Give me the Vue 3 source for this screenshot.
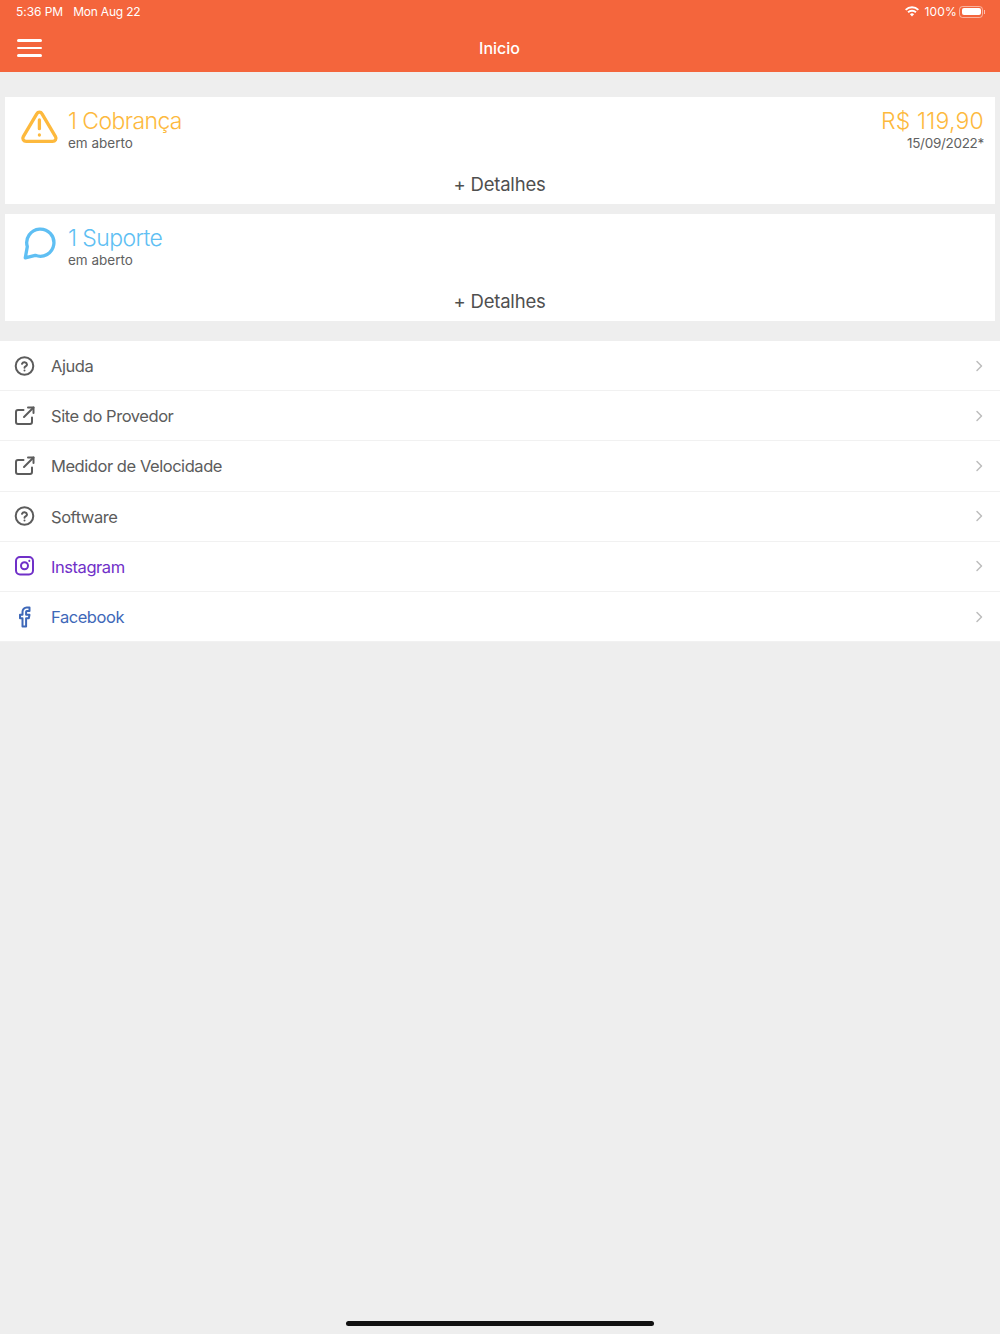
<script setup>
const cards = [
  { id: 'cobranca', title: '1 Cobrança', tone: 'warn', icon: 'alert', value: 'R$ 119,90', date: '15/09/2022*' },
  { id: 'suporte', title: '1 Suporte', tone: 'info', icon: 'chat' },
]

const links = [
  { label: 'Ajuda', icon: 'help', tone: '' },
  { label: 'Site do Provedor', icon: 'open', tone: '' },
  { label: 'Medidor de Velocidade', icon: 'open', tone: '' },
  { label: 'Software', icon: 'help', tone: '' },
  { label: 'Instagram', icon: 'insta', tone: 'insta' },
  { label: 'Facebook', icon: 'face', tone: 'face' },
]
</script>

<template>
  <div class="page">
    <header class="header">
      <div class="status">
        <span class="time">5:36 PM</span>
        <span class="day">Mon Aug 22</span>
        <span class="status-right">
          <svg class="wifi" width="14" height="11" viewBox="0 0 14 11">
            <path d="M7 10.4 4.9 8.2a3 3 0 0 1 4.2 0z" fill="#fff" />
            <path d="M3.7 7 2.4 5.6a6.6 6.6 0 0 1 9.2 0L10.3 7a4.7 4.7 0 0 0-6.6 0z" fill="#fff" />
            <path d="M1.3 4.6 0 3.2a10 10 0 0 1 14 0l-1.3 1.4a8.2 8.2 0 0 0-11.4 0z" fill="#fff" />
          </svg>
          <span class="percent">100%</span>
          <span class="battery"><span class="battery-fill"></span></span>
          <span class="battery-tip"></span>
        </span>
      </div>
      <div class="toolbar">
        <div class="burger"><span></span><span></span><span></span></div>
        <div class="title">Inicio</div>
      </div>
    </header>

    <section class="cards">
      <div v-for="card in cards" :key="card.id" class="card">
        <div class="card-top">
          <svg v-if="card.icon === 'alert'" class="card-icon" width="40" height="36" viewBox="0 0 40 36" fill="none" stroke="#fdb93d" stroke-width="3.3" stroke-linecap="round" stroke-linejoin="round">
            <path d="M16.9 4.6 3.3 27.6c-1.4 2.3.3 4.7 2.9 4.7h26.400c2.600 0 4.300-2.400 2.900-4.700L21.900 4.600c-1.100-2-3.900-2-5 0z" />
            <path d="M19.400 11v8.700" />
            <path d="M19.400 26v.1" />
          </svg>
          <svg v-else class="card-icon" width="40" height="36" viewBox="0 0 40 36" fill="none" stroke="#5fbff3" stroke-width="3.3" stroke-linecap="round" stroke-linejoin="round">
            <path d="M7.300 20.600 5.300 31.800 15.300 29.300A13.600 13.600 0 1 0 7.300 20.600z" />
          </svg>
          <div class="card-text">
            <div class="card-title" :class="card.tone">{{ card.title }}</div>
            <div class="card-sub">em aberto</div>
          </div>
          <div v-if="card.value" class="card-right">
            <div class="card-title card-value warn">{{ card.value }}</div>
            <div class="card-date">{{ card.date }}</div>
          </div>
        </div>
        <div class="more">+ Detalhes</div>
      </div>
    </section>

    <ul class="list">
      <li v-for="link in links" :key="link.label" class="row" :class="link.tone">
        <svg class="row-icon" width="22" height="22" viewBox="0 0 22 22" fill="none" stroke="currentColor" stroke-width="2" stroke-linecap="round" stroke-linejoin="round">
          <template v-if="link.icon === 'help'">
            <circle cx="10.500" cy="11" r="8.800" />
            <path d="M8 8.800a2.600 2.600 0 0 1 5 .7c0 1.700-2.500 2-2.500 3.200" />
            <path d="M10.500 15.500v.1" />
          </template>
          <template v-else-if="link.icon === 'open'">
            <path d="M18 12.500v4.500a2 2 0 0 1-2 2H4a2 2 0 0 1-2-2V7a2 2 0 0 1 2-2h5.500" />
            <path d="M14 2.500h5.500V8" />
            <path d="M19.500 2.500 10 12" />
          </template>
          <template v-else-if="link.icon === 'insta'">
            <rect x="2" y="2" width="17" height="17.500" rx="4" />
            <circle cx="10.500" cy="10.700" r="3.500" />
            <path d="M15.300 5.800v.1" />
          </template>
          <template v-else>
            <path d="M15.500 1.500h-2.800A4.200 4.200 0 0 0 8.500 5.700v3H6v3.600h2.500v8.200h3.600v-8.200h2.700l.7-3.600h-3.400V5.700a.7.700 0 0 1 .7-.7h2.700z" />
          </template>
        </svg>
        <span class="row-label">{{ link.label }}</span>
        <svg class="chevron" width="8" height="12" viewBox="0 0 8 12" fill="none" stroke="#bdbdbd" stroke-width="1.500" stroke-linecap="round" stroke-linejoin="round">
          <path d="M2 1.500 6.500 6 2 10.500" />
        </svg>
      </li>
    </ul>

    <div class="home-bar"></div>
  </div>
</template>

<style>
body {
  background: #eeeeee;
}
</style>

<style scoped>
.page {
  position: relative;
  height: 1334px;
  background: #eeeeee;
  font-family: Inter, "Liberation Sans", sans-serif;
  overflow: hidden;
}
.header {
  height: 72px;
  background: #f4653c;
  color: #fff;
}
.status {
  display: flex;
  align-items: center;
  height: 23px;
  padding: 0 15px 0 16px;
  font-size: 12px;
  letter-spacing: -0.05px;
  color: #fff;
}
.day {
  margin-left: 10px;
  letter-spacing: -0.2px;
}
.status-right {
  display: flex;
  align-items: center;
  margin-left: auto;
}
.wifi {
  margin-right: 5px;
}
.percent {
  letter-spacing: 0.2px;
}
.battery {
  display: block;
  width: 24px;
  height: 12px;
  margin-left: 2px;
  padding: 1.5px;
  border: 1px solid rgba(255, 255, 255, 0.5);
  border-radius: 3.5px;
  box-sizing: border-box;
}
.battery-fill {
  display: block;
  height: 100%;
  background: #fff;
  border-radius: 2px;
}
.battery-tip {
  width: 1px;
  height: 4px;
  margin-left: 1px;
  background: rgba(255, 255, 255, 0.6);
}
.toolbar {
  position: relative;
  display: flex;
  align-items: center;
  justify-content: center;
  height: 49px;
}
.burger {
  position: absolute;
  left: 17px;
  top: 16px;
  display: flex;
  flex-direction: column;
  gap: 5px;
  width: 25px;
}
.burger span {
  height: 2.5px;
  background: #fff;
  border-radius: 2px;
}
.title {
  font-size: 16px;
  font-weight: 500;
  margin-left: -1px;
}
.cards {
  display: flex;
  flex-direction: column;
  gap: 10px;
  padding: 25px 5px 0;
}
.card {
  height: 107px;
  background: #fff;
}
.card-top {
  display: flex;
  height: 65px;
  padding: 11px 11px 0 15px;
}
.card-icon {
  margin-top: 1px;
  flex: none;
}
.card-text {
  margin-left: 8px;
}
.card-title {
  font-size: 23px;
  font-weight: 350;
  line-height: 26px;
  letter-spacing: -0.6px;
}
.card-value {
  letter-spacing: 0.2px;
}
.warn {
  color: #fdb93d;
}
.info {
  color: #5fbff3;
}
.card-sub,
.card-date {
  font-size: 13.5px;
  line-height: 18px;
  color: #616161;
}
.card-date {
  letter-spacing: -0.3px;
}
.card-right {
  margin-left: auto;
  text-align: right;
}
.more {
  text-align: center;
  font-size: 18.5px;
  line-height: 22px;
  letter-spacing: -0.2px;
  color: #4f4f4f;
  margin-left: -1px;
}
.list {
  list-style: none;
  margin: 20px 0 0;
  padding: 0;
  background: #fff;
}
.row {
  display: flex;
  align-items: center;
  height: 50.2px;
  padding: 0 17px 0 14px;
  border-bottom: 1px solid #f1f1f1;
  box-sizing: border-box;
  color: #5c5c5c;
}
.row-icon {
  flex: none;
}
.row-label {
  margin-left: 15px;
  font-size: 16.5px;
  letter-spacing: -0.45px;
  padding-top: 1px;
}
.chevron {
  margin-left: auto;
}
.row.insta {
  color: #7030c8;
}
.row.face {
  color: #3e68b8;
}
.home-bar {
  position: absolute;
  left: 346px;
  bottom: 8px;
  width: 308px;
  height: 5px;
  border-radius: 3px;
  background: #111;
}
</style>
